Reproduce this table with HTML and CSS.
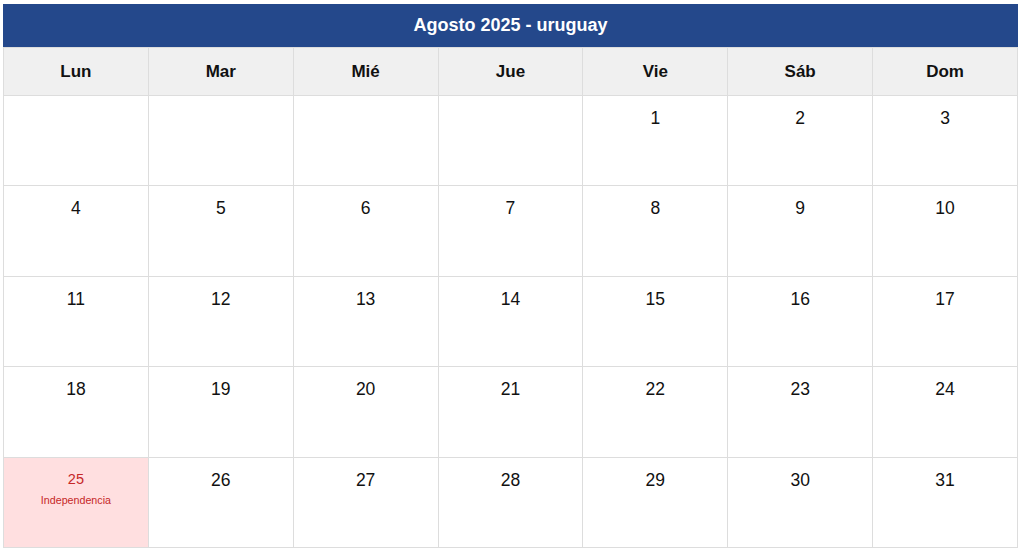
FILE: index.html
```html
<!DOCTYPE html>
<html lang="es">
<head>
<meta charset="utf-8">
<title>Agosto 2025 - uruguay</title>
<link rel="stylesheet" href="styles.css">
</head>
<body>
<div class="calendar">
  <div class="title">Agosto 2025 - uruguay</div>
  <table class="grid">
    <thead>
      <tr>
        <th>Lun</th><th>Mar</th><th>Mié</th><th>Jue</th><th>Vie</th><th>Sáb</th><th>Dom</th>
      </tr>
    </thead>
    <tbody>
      <tr>
        <td></td><td></td><td></td><td></td>
        <td><span class="num">1</span></td><td><span class="num">2</span></td><td><span class="num">3</span></td>
      </tr>
      <tr>
        <td><span class="num">4</span></td><td><span class="num">5</span></td><td><span class="num">6</span></td><td><span class="num">7</span></td>
        <td><span class="num">8</span></td><td><span class="num">9</span></td><td><span class="num">10</span></td>
      </tr>
      <tr>
        <td><span class="num">11</span></td><td><span class="num">12</span></td><td><span class="num">13</span></td><td><span class="num">14</span></td>
        <td><span class="num">15</span></td><td><span class="num">16</span></td><td><span class="num">17</span></td>
      </tr>
      <tr>
        <td><span class="num">18</span></td><td><span class="num">19</span></td><td><span class="num">20</span></td><td><span class="num">21</span></td>
        <td><span class="num">22</span></td><td><span class="num">23</span></td><td><span class="num">24</span></td>
      </tr>
      <tr>
        <td class="holiday"><span class="num">25</span><span class="hname">Independencia</span></td>
        <td><span class="num">26</span></td><td><span class="num">27</span></td><td><span class="num">28</span></td>
        <td><span class="num">29</span></td><td><span class="num">30</span></td><td><span class="num">31</span></td>
      </tr>
    </tbody>
  </table>
</div>
</body>
</html>
```

FILE: styles.css
```css
html, body {
  margin: 0;
  padding: 0;
  background: #ffffff;
}

body {
  font-family: "Liberation Sans", Arial, sans-serif;
  color: #111111;
}

.calendar {
  width: 1015px;
  margin: 4px 0 0 3px;
}

.title {
  height: 43px;
  background: #24488b;
  color: #ffffff;
  font-size: 18px;
  font-weight: bold;
  display: flex;
  align-items: center;
  justify-content: center;
}

.grid {
  width: 100%;
  border-collapse: collapse;
  table-layout: fixed;
}

.grid th,
.grid td {
  border: 1px solid #dddddd;
  text-align: center;
}

.grid th {
  height: 47px;
  padding: 0;
  background: #f0f0f0;
  font-size: 17px;
  font-weight: bold;
  color: #111111;
  vertical-align: middle;
}

.grid td {
  height: 90.4px;
  padding: 12px 4px 0;
  vertical-align: top;
  font-size: 17.5px;
  box-sizing: border-box;
}

.num {
  display: block;
  line-height: 20px;
}

.holiday {
  background: #ffdfe0;
  color: #c62828;
}

.holiday .num {
  font-size: 14.5px;
  line-height: 18px;
}

.hname {
  display: block;
  margin-top: 6px;
  font-size: 10.7px;
  line-height: 13px;
}
```
